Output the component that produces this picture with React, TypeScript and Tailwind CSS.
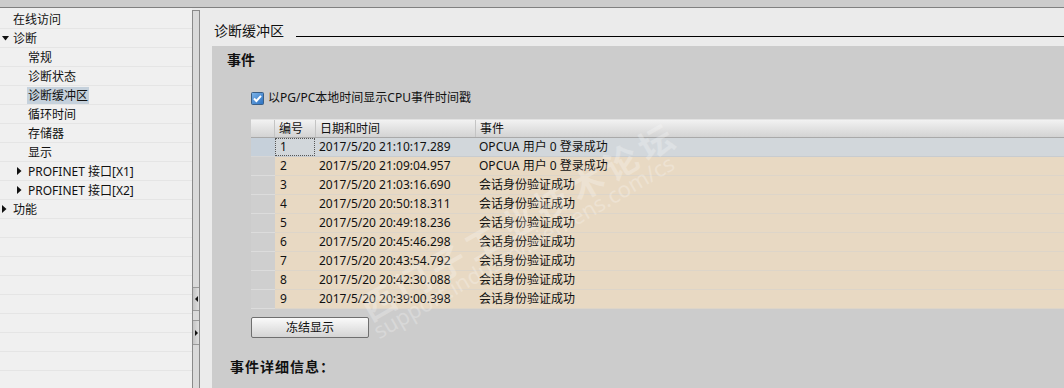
import React from 'react'

const tree = [
    { label: '在线访问', level: 0 },
    { label: '诊断', level: 0, arrow: 'down' },
    { label: '常规', level: 1 },
    { label: '诊断状态', level: 1 },
    { label: '诊断缓冲区', level: 1, selected: true },
    { label: '循环时间', level: 1 },
    { label: '存储器', level: 1 },
    { label: '显示', level: 1 },
    { label: 'PROFINET 接口[X1]', level: 1, arrow: 'right' },
    { label: 'PROFINET 接口[X2]', level: 1, arrow: 'right' },
    { label: '功能', level: 0, arrow: 'right' },
]

const events = [
    { no: 1, time: '2017/5/20 21:10:17.289', text: 'OPCUA 用户 0 登录成功' },
    { no: 2, time: '2017/5/20 21:09:04.957', text: 'OPCUA 用户 0 登录成功' },
    { no: 3, time: '2017/5/20 21:03:16.690', text: '会话身份验证成功' },
    { no: 4, time: '2017/5/20 20:50:18.311', text: '会话身份验证成功' },
    { no: 5, time: '2017/5/20 20:49:18.236', text: '会话身份验证成功' },
    { no: 6, time: '2017/5/20 20:45:46.298', text: '会话身份验证成功' },
    { no: 7, time: '2017/5/20 20:43:54.792', text: '会话身份验证成功' },
    { no: 8, time: '2017/5/20 20:42:30.088', text: '会话身份验证成功' },
    { no: 9, time: '2017/5/20 20:39:00.398', text: '会话身份验证成功' },
]

const Arrow = ({ dir }: { dir: string }) =>
    dir === 'down' ? (
        <svg width="7" height="5" viewBox="0 0 7 5"><path d="M0 0H7L3.5 4.5Z" fill="#111" /></svg>
    ) : (
        <svg width="5" height="8" viewBox="0 0 5 8"><path d="M0 0V8L4.5 4Z" fill="#111" /></svg>
    )

const Tree = () => (
    <div className="w-[192px] shrink-0 bg-[#f0f0f0] pt-[2px]">
        {Array.from({ length: 21 }).map((_, i) => {
            const t = tree[i]
            return (
                <div key={i} className="h-[19px] border-b border-[#e5e5e5] flex items-center text-[12px] text-[#111]">
                    {t && (
                        <>
                            <div className={t.level === 0 ? 'w-[13px] pl-[2px] flex items-center' : 'w-[28px] pl-[17px] flex items-center'}>
                                {t.arrow && <Arrow dir={t.arrow} />}
                            </div>
                            <span className={t.selected ? 'bg-[#c5d1dc] px-[1px] -ml-[1px] leading-[17px]' : 'leading-[17px]'}>{t.label}</span>
                        </>
                    )}
                </div>
            )
        })}
    </div>
)

const Splitter = () => (
    <div className="w-[8px] shrink-0 mt-[2px] border-x border-t border-[#8a8a8a] bg-[#dadada] flex flex-col">
        <div className="h-[276px]" />
        <div className="h-[24px] bg-gradient-to-r from-[#c4c4c4] to-[#e0e0e0] border-y border-[#9a9a9a] flex items-center justify-center">
            <svg width="3" height="6" viewBox="0 0 3 6"><path d="M3 0V6L0 3Z" fill="#111" /></svg>
        </div>
        <div className="h-[9px]" />
        <div className="h-[25px] bg-gradient-to-r from-[#c4c4c4] to-[#e0e0e0] border-y border-[#9a9a9a] flex items-center justify-center">
            <svg width="3" height="6" viewBox="0 0 3 6"><path d="M0 0V6L3 3Z" fill="#111" /></svg>
        </div>
    </div>
)

const Checkbox = () => (
    <svg width="13" height="13" viewBox="0 0 13 13">
        <defs>
            <linearGradient id="cb" x1="0" y1="0" x2="1" y2="1">
                <stop offset="0" stopColor="#7fb6ea" />
                <stop offset="1" stopColor="#2a6fc0" />
            </linearGradient>
        </defs>
        <rect x="0.5" y="0.5" width="12" height="12" rx="1" fill="url(#cb)" stroke="#3a5f86" />
        <path d="M3 6.5L5.4 9L10 3.8" fill="none" stroke="#fff" strokeWidth="2" />
    </svg>
)

const EventTable = () => (
    <div className="mt-[13px] ml-[39px] text-[12px] text-[#111]">
        <div className="flex h-[19px] border-t border-[#e2e2e2] border-b border-b-[#a9a9a9] bg-gradient-to-b from-[#f2f2f2] to-[#d3d3d3]">
            <div className="w-[24px] border-r border-[#c4c4c4]" />
            <div className="w-[40px] pl-[4px] leading-[17px]">编号</div>
            <div className="w-[160px] pl-[4px] leading-[17px] border-l border-[#c4c4c4]">日期和时间</div>
            <div className="flex-1 pl-[4px] leading-[17px] border-l border-[#c4c4c4]">事件</div>
        </div>
        {events.map((e, i) => (
            <div key={e.no} className="flex h-[19px]">
                <div className={i === 0 ? 'w-[24px] bg-[#c6d0da] border-b border-[#d6d6d6]' : 'w-[24px] bg-[#cfcfcf] border-b border-[#dcdcdc]'} />
                <div className={i === 0 ? 'flex flex-1 bg-[#d2d7db] border-b border-[#c8ccd0]' : 'flex flex-1 bg-[#e8d9c3] border-b border-[#ddd5c9]'}>
                    <div className={i === 0 ? 'w-[40px] pl-[4px] leading-[16px] border border-dotted border-[#555]' : 'w-[40px] pl-[5px] leading-[18px]'}>{e.no}</div>
                    <div className="w-[160px] pl-[4px] leading-[18px]">{e.time}</div>
                    <div className="flex-1 pl-[4px] leading-[18px]">{e.text}</div>
                </div>
            </div>
        ))}
    </div>
)

// faint forum watermark across the table
const Watermark = () => (
    <div className="absolute inset-0 pointer-events-none overflow-hidden text-white/25">
        <div className="absolute left-[140px] top-[188px] -rotate-[30deg] text-[34px] font-bold tracking-[6px] whitespace-nowrap">西门子工业技术论坛</div>
        <div className="absolute left-[152px] top-[222px] -rotate-[30deg] text-[22px] whitespace-nowrap">support.industry.siemens.com/cs</div>
    </div>
)

const App = () => {
    return (
        <div className="w-[1064px] h-[388px] overflow-hidden flex flex-col bg-[#ebebeb] font-['Noto_Sans','Noto_Sans_CJK_SC',sans-serif]">
            <div className="h-[8px] shrink-0 bg-[#cccccc] border-b border-[#808080]" />
            <div className="flex flex-1 min-h-0">
                <Tree />
                <Splitter />
                <div className="flex-1 flex flex-col pl-[12px] min-w-0 relative">
                    <div className="h-[38px] shrink-0 flex -ml-[12px] pl-[14px]">
                        <div className="pt-[13px] text-[14px] leading-[20px] text-[#111]">诊断缓冲区</div>
                        <div className="flex-1 ml-[12px] h-[29px] border-b border-black" />
                    </div>
                    <div className="flex-1 bg-[#cccccc] flex flex-col">
                        <div className="pt-[4px] pl-[15px] text-[14px] leading-[20px] font-bold text-[#111]">事件</div>
                        <div className="mt-[20px] ml-[39px] flex items-center gap-[4px] h-[16px] text-[12px] text-[#111]">
                            <Checkbox />
                            <span>以PG/PC本地时间显示CPU事件时间戳</span>
                        </div>
                        <EventTable />
                        <div className="mt-[5px] ml-[39px]">
                            <button className="w-[118px] h-[21px] rounded-[2px] border border-[#6f6f6f] bg-gradient-to-b from-[#fafafa] to-[#d4d4d4] text-[12px] leading-[19px] text-[#111]">冻结显示</button>
                        </div>
                        <div className="mt-[19px] pl-[18px] text-[14px] leading-[20px] font-bold text-[#111] tracking-[1px]">事件详细信息：</div>
                    </div>
                    <Watermark />
                </div>
            </div>
        </div>
    )
}

export default App
